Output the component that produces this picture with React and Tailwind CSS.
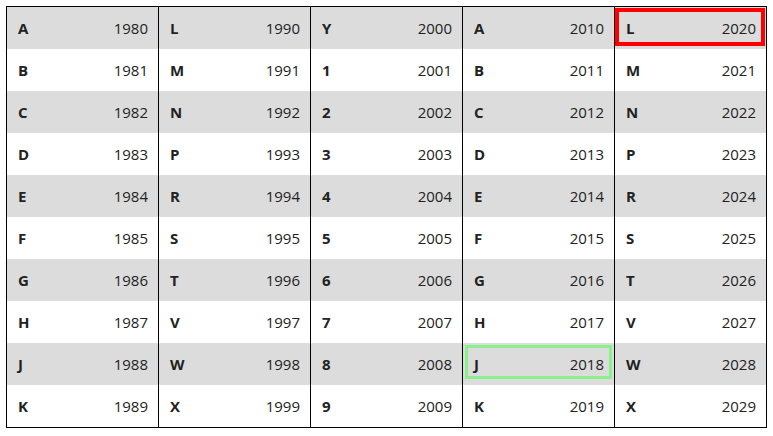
const cols = [
  { letters: ["A","B","C","D","E","F","G","H","J","K"], start: 1980 },
  { letters: ["L","M","N","P","R","S","T","V","W","X"], start: 1990 },
  { letters: ["Y","1","2","3","4","5","6","7","8","9"], start: 2000 },
  { letters: ["A","B","C","D","E","F","G","H","J","K"], start: 2010 },
  { letters: ["L","M","N","P","R","S","T","V","W","X"], start: 2020 },
];

function Cell({ letter, year, gray, hl }) {
  const bg = gray ? "bg-[#dcdcdc]" : "bg-white";
  return (
    <div className={`relative h-[42px] ${bg} flex items-center justify-between pl-[11px] pr-[10px]`}>
      <span className="font-bold">{letter}</span>
      <span>{year}</span>
      {hl === "red" && (
        <div className="absolute left-0 right-[1px] top-[1px] bottom-[3px] border-4 border-[#ff0000]" />
      )}
      {hl === "green" && (
        <div className="absolute left-[2px] right-[2px] top-[2px] bottom-[6px] border-[3px] border-[#8af08a]" />
      )}
    </div>
  );
}

export default function App() {
  return (
    <div className="w-[773px] h-[436px] bg-white pt-[6px] pl-[6px]" style={{ fontFamily: '"Open Sans", sans-serif' }}>
      <div className="w-[761px] border border-black flex text-[15px] text-[#222]">
        {cols.map((c, ci) => (
          <div key={ci} className={`flex flex-col ${ci < 4 ? "w-[152px] border-r border-black" : "w-[151px]"}`}>
            {c.letters.map((l, ri) => {
              const year = c.start + ri;
              const hl = year === 2020 ? "red" : year === 2018 ? "green" : null;
              return <Cell key={ri} letter={l} year={year} gray={ri % 2 === 0} hl={hl} />;
            })}
          </div>
        ))}
      </div>
    </div>
  );
}
